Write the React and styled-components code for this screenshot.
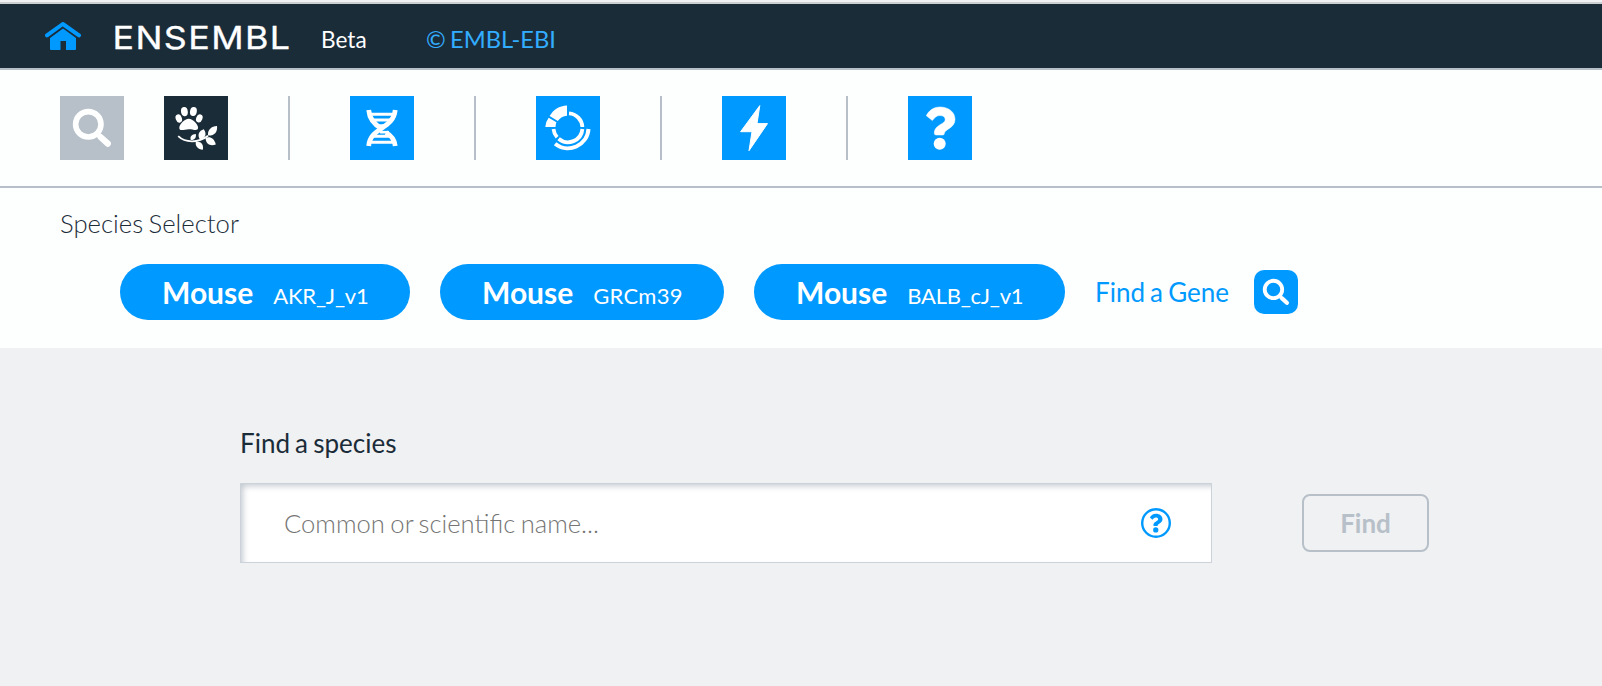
import React from 'react';
import styled, { createGlobalStyle } from 'styled-components';

const blue = '#0099ff';
const navy = '#1b2c39';
const grey = '#b7c0c8';

const GlobalStyle = createGlobalStyle`
  *, *::before, *::after { box-sizing: border-box; }
  body {
    margin: 0;
    background: #f0f1f3;
    color: ${navy};
    font-family: Lato, "Liberation Sans", sans-serif;
    word-spacing: -1.5px;
    overflow: hidden;
  }
`;

const Page = styled.div`
  height: 100vh;
  display: flex;
  flex-direction: column;
`;

const TopBar = styled.header`
  flex: none;
  height: 68px;
  margin-top: 2px;
  border-top: 2px solid #cccfcf;
  border-bottom: 2px solid ${grey};
  background: ${navy};
  display: flex;
  align-items: flex-start;
  padding-left: 45px;
`;

const HomeLink = styled.svg`
  width: 36px;
  height: 28px;
  margin-top: 18px;
  fill: ${blue};
`;

const Logo = styled.svg`
  width: 178px;
  height: 32px;
  margin: 18px 0 0 33px;
  overflow: visible;

  text {
    font-family: Inter, Lato, sans-serif;
    font-size: 30.5px;
    font-weight: 400;
    letter-spacing: 1.2px;
    fill: #fff;
    stroke: #fff;
    stroke-width: 0.3px;
  }
`;

const Release = styled.span`
  width: 46px;
  margin: 22px 0 0 29px;
  font-size: 22.6px;
  line-height: 28px;
  color: #fff;
`;

const Institute = styled.a`
  margin: 22px 0 0 59px;
  font-size: 23.7px;
  line-height: 27px;
  word-spacing: -1.8px;
  color: #33adff;
`;

const Launchbar = styled.nav`
  flex: none;
  height: 118px;
  padding: 0 60px;
  border-bottom: 2px solid ${grey};
  background: #fdfefe;
  display: flex;
  align-items: center;
`;

const AppButton = styled.button`
  width: 64px;
  height: 64px;
  padding: 0;
  border: 0;
  background: ${(p) => p.$fill || blue};
  color: #fff;

  & + & { margin-left: 40px; }
  svg { display: block; width: 64px; height: 64px; }
`;

const Divider = styled.span`
  width: 2px;
  height: 64px;
  margin: 0 60px;
  background: ${grey};
`;

const SpeciesPanel = styled.section`
  flex: none;
  height: 160px;
  background: #fdfefe;
`;

const PanelTitle = styled.h1`
  margin: 0;
  padding: 19px 0 0 60px;
  font-size: 25.7px;
  line-height: 32px;
  font-weight: 300;
`;

const SpeciesRow = styled.div`
  display: flex;
  align-items: center;
  height: 56px;
  margin: 25px 0 0 120px;
`;

const Lozenge = styled.div`
  width: ${(p) => p.$width}px;
  height: 56px;
  margin-right: 30px;
  padding-left: 42px;
  border-radius: 28px;
  background: ${blue};
  color: #fff;
  display: flex;
  align-items: baseline;
  line-height: 56px;
  white-space: nowrap;
`;

const SpeciesName = styled.strong`
  font-size: 30px;
  font-weight: 700;
`;

const Assembly = styled.span`
  margin-left: 20px;
  font-size: 22px;
  letter-spacing: ${(p) => p.$tracking}px;
`;

const GeneLink = styled.a`
  width: 134px;
  font-size: 26px;
  line-height: 56px;
  color: ${blue};
  white-space: nowrap;
`;

const GeneButton = styled.button`
  width: 44px;
  height: 44px;
  margin-left: 25px;
  padding: 0;
  border: 0;
  border-radius: 10px;
  background: ${blue};
  color: #fff;

  svg { display: block; width: 44px; height: 44px; }
`;

const SearchForm = styled.main`
  padding: 79px 0 0 240px;
`;

const FieldLabel = styled.label`
  display: block;
  font-size: 26px;
  line-height: 32px;
`;

const FieldRow = styled.div`
  display: flex;
  align-items: center;
  margin-top: 24px;
`;

const SearchField = styled.div`
  width: 972px;
  height: 80px;
  padding: 0 39px 0 43px;
  border: 1px solid #ccd2d9;
  background: #fff;
  box-shadow: inset 4px 4px 6px -2px #c4cad0;
  display: flex;
  align-items: center;

  svg { flex: none; width: 32px; height: 32px; }
`;

const SearchInput = styled.input`
  flex: 1;
  min-width: 0;
  height: 50px;
  padding: 0;
  border: 0;
  background: transparent;
  outline: 0;
  font: 300 25.6px Lato, sans-serif;
  word-spacing: -1.5px;

  &::placeholder { color: #757575; opacity: 1; }
`;

const FindButton = styled.button`
  width: 127px;
  height: 58px;
  margin-left: 90px;
  padding: 0;
  border: 2px solid ${grey};
  border-radius: 8px;
  background: transparent;
  color: ${grey};
  font: 700 26px Lato, sans-serif;
`;

const SearchIcon = () => (
  <svg viewBox="0 0 64 64" fill="none" stroke="currentColor">
    <circle cx="28.3" cy="28.3" r="12.7" strokeWidth="5.6" />
    <path d="M38 38.5L40.5 41" strokeWidth="5" />
    <path d="M40.8 41.3L47.8 47.6" strokeWidth="6.2" strokeLinecap="round" />
  </svg>
);

const SpeciesIcon = () => (
  <svg viewBox="0 0 64 64" fill="currentColor">
    <ellipse cx="14.8" cy="22.5" rx="3.1" ry="4.2" transform="rotate(-20 14.8 22.5)" />
    <ellipse cx="20.4" cy="15.6" rx="3.4" ry="4.6" transform="rotate(-8 20.4 15.6)" />
    <ellipse cx="29.4" cy="15.5" rx="3.4" ry="4.6" transform="rotate(10 29.4 15.5)" />
    <ellipse cx="35.3" cy="22.3" rx="3.1" ry="4.2" transform="rotate(22 35.3 22.3)" />
    <path d="M24.8 22.8C28.8 22.8 34.2 28.4 34.1 31.8C34 35.6 29 33.2 24.8 33.2C20.5 33.2 15.5 35.9 15.3 31.9C15.2 28.4 20.6 22.8 24.8 22.8Z" />
    <path d="M14.2 40.2C21 46.8 34 47.5 44 39.8" fill="none" stroke="currentColor" strokeWidth="1.8" />
    <path d="M44 39.6C43.4 33.5 47.4 30.4 53 30C53.7 35.7 50.8 39.8 44 39.6Z" />
    <path d="M41.5 42C45.4 39.8 50.4 42 51.8 48.5C46.4 50.4 42 48.3 41.5 42Z" />
    <path d="M36 43.6C32.9 39 34.9 34.6 39.8 33.2C43.1 37.9 41.6 42 36 43.6Z" />
    <path d="M31.8 46C36.8 45 39.9 48.2 38.8 53.8C33.9 53.3 31.1 50.2 31.8 46Z" />
    <path d="M26.8 44C25.5 40.2 28.1 38.2 31.8 38C32.5 41.5 30.7 44.2 26.8 44Z" />
  </svg>
);

const DnaIcon = () => (
  <svg viewBox="0 0 64 64" fill="none" stroke="currentColor" strokeWidth="4.8">
    <path d="M18.7 14C19.4 23 25 29 32 33" />
    <path d="M45.2 14C43.5 33.5 20 31 18.7 50" />
    <path d="M36 36.5C40.5 39 44.6 43 45.2 50" />
    <path d="M20 18.3H44M23 24.1H41M24 40.2H41M20 46.3H44" strokeWidth="3" />
    <path d="M30 36.2H39" strokeWidth="2.6" />
    <path d="M28 29L36 28.6L31.8 32Z" fill="currentColor" strokeWidth="1" />
  </svg>
);

const GenomeIcon = () => (
  <svg viewBox="0 0 64 64" fill="none" stroke="currentColor" strokeWidth="3.8">
    <path d="M33 17.3A14.5 14.5 0 0 1 46.4 31" />
    <path d="M46.4 33A14.5 14.5 0 0 1 22.6 42.8" />
    <path d="M21.1 41.2A14.5 14.5 0 0 1 17.5 33" />
    <path d="M52.5 33A20.6 20.6 0 0 1 19.1 47.8" strokeWidth="4" />
    <path d="M31 9.4V19.7C27.2 19.8 23.9 21.8 21.8 25.1L13.6 20.1C17.2 13.7 23.2 9.7 31 9.4Z" fill="currentColor" stroke="none" />
    <path d="M12.7 21.8L20.4 26.2Q19.6 28.1 19.5 31H9.3Q9.5 25.9 12.7 21.8Z" fill="currentColor" stroke="none" />
  </svg>
);

const BoltIcon = () => (
  <svg viewBox="0 0 64 64" fill="currentColor" stroke="currentColor" strokeWidth="1" strokeLinejoin="round">
    <path d="M37.8 9.6L35 27.6H45.5L27 54.7L30 35.7H18.6Z" />
  </svg>
);

const questionPath =
  'M18.3 19.7C21 14.2 26 11 32 11C40.5 11 47 16 47 23.4C47 32 36.4 33.4 36.4 37.3Q36.4 39 34.8 39H28Q26.3 39 26.3 37.3C26.3 28.5 37.2 28.5 37.2 23.5C37.2 21 35 19.5 32 19.5C28.6 19.5 26.6 21.6 24.4 24.6Z';

const QuestionIcon = () => (
  <svg viewBox="0 0 64 64" fill="currentColor">
    <path d={questionPath} strokeLinejoin="round" stroke="currentColor" strokeWidth=".5" />
    <circle cx="31.7" cy="47.8" r="6" />
  </svg>
);

const HelpIcon = () => (
  <svg viewBox="0 0 32 32" fill={blue}>
    <circle cx="16" cy="16" r="13.8" fill="none" stroke={blue} strokeWidth="2.4" />
    <g transform="translate(1.8 1.9) scale(.44)">
      <path d={questionPath} />
      <circle cx="31.7" cy="47.8" r="6" />
    </g>
  </svg>
);

const species = [
  { assembly: 'AKR_J_v1', width: 290, tracking: -0.2 },
  { assembly: 'GRCm39', width: 284, tracking: 0.25 },
  { assembly: 'BALB_cJ_v1', width: 311, tracking: -0.25 },
];

export default function App() {
  return (
    <Page>
      <GlobalStyle />
      <TopBar>
        <HomeLink viewBox="0 0 36 28">
          <path d="M2 13.4L17.8 2L34 13.4" fill="none" stroke={blue} strokeWidth="4" strokeLinecap="round" strokeLinejoin="round" />
          <path d="M5 16L18 6.6L31 16V27Q31 28 30 28H21V19H15.5V28H6Q5 28 5 27Z" />
        </HomeLink>
        <Logo viewBox="0 0 178 32">
          <text x="-1.5" y="27" textLength="179" lengthAdjust="spacingAndGlyphs">ENSEMBL</text>
        </Logo>
        <Release>Beta</Release>
        <Institute>© EMBL-EBI</Institute>
      </TopBar>
      <Launchbar>
        <AppButton $fill={grey}><SearchIcon /></AppButton>
        <AppButton $fill={navy}><SpeciesIcon /></AppButton>
        <Divider />
        <AppButton><DnaIcon /></AppButton>
        <Divider />
        <AppButton><GenomeIcon /></AppButton>
        <Divider />
        <AppButton><BoltIcon /></AppButton>
        <Divider />
        <AppButton><QuestionIcon /></AppButton>
      </Launchbar>
      <SpeciesPanel>
        <PanelTitle>Species Selector</PanelTitle>
        <SpeciesRow>
          {species.map((item) => (
            <Lozenge key={item.assembly} $width={item.width}>
              <SpeciesName>Mouse</SpeciesName>
              <Assembly $tracking={item.tracking}>{item.assembly}</Assembly>
            </Lozenge>
          ))}
          <GeneLink>Find a Gene</GeneLink>
          <GeneButton><SearchIcon /></GeneButton>
        </SpeciesRow>
      </SpeciesPanel>
      <SearchForm>
        <FieldLabel htmlFor="species">Find a species</FieldLabel>
        <FieldRow>
          <SearchField>
            <SearchInput id="species" placeholder="Common or scientific name..." />
            <HelpIcon />
          </SearchField>
          <FindButton disabled>Find</FindButton>
        </FieldRow>
      </SearchForm>
    </Page>
  );
}
